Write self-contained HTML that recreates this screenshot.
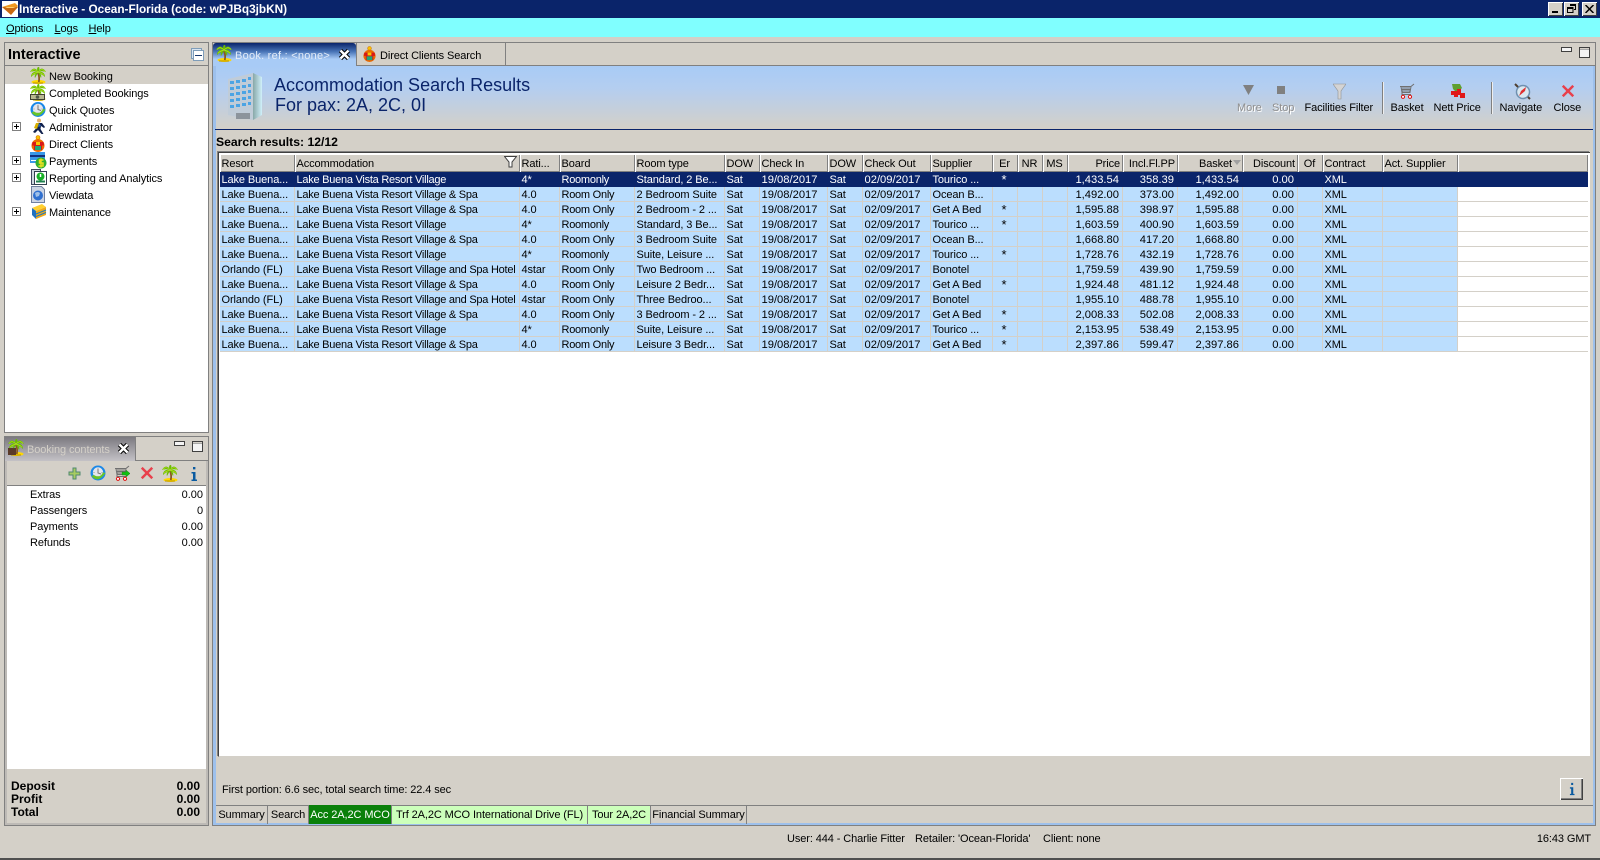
<!DOCTYPE html>
<html><head><meta charset="utf-8"><title>Interactive - Ocean-Florida</title>
<style>
html,body{margin:0;padding:0;width:1600px;height:860px;overflow:hidden;background:#d4d0c8;font:11px/14px "Liberation Sans",Arial,sans-serif;letter-spacing:-.1px;color:#000}
.a{position:absolute}
.t{position:absolute;white-space:nowrap;line-height:14px;margin-top:1px}
.t[style*="font-size"]{margin-top:0}
svg{position:absolute;display:block}
u{text-decoration:underline}
#tb{left:220px;top:154px;border-collapse:separate;border-spacing:0;table-layout:fixed;width:1368px;position:absolute}
#tb th,#tb td{padding:0 0 0 1.500px;overflow:hidden;white-space:nowrap;font-weight:normal;text-align:left;box-sizing:border-box}
#tb th{height:18px;line-height:16px;background:#d4d0c8;box-shadow:inset 1px 1px 0 #fff,inset -1px -1px 0 #808080,inset -2px -2px 0 #d4d0c8;vertical-align:top;padding-top:2px}
#tb td{height:15px;line-height:12px;padding-top:2px;background:#bbdefe;border-right:1px solid #d4d0c8;border-bottom:1px solid #d4d0c8;vertical-align:top}
#tb td:last-child{background:#fff;border-right:0}
#tb td:nth-child(7),#tb td:nth-child(9),#tb td:nth-child(14),#tb td:nth-child(15),#tb td:nth-child(16),#tb td:nth-child(17){font-size:11.200px;letter-spacing:0}
#tb td:nth-child(2),#tb td:nth-child(4){letter-spacing:-.25px}
#tb td:nth-child(11){font-size:13px;padding-left:8.500px}
#tb .r{text-align:right;padding:2px 3px 0 0}
#tb th.r{padding:2px 3px 0 0}
#tb th.c{text-align:center;padding:2px 2px 0 0}
#tb tr.s td,#tb tr.s td:last-child{background:#0a246a;color:#fff;border-color:#0a246a}
.pane{border:1px solid #808080;box-sizing:border-box}
.btm{position:absolute;top:806px;height:18px;line-height:19px;text-align:center;white-space:nowrap;box-sizing:border-box;border-right:1px solid #808080}
.pb{width:7px;height:7px;border:1px solid #808080;background:#fff;position:absolute;left:12px}
.pb:before{content:"";position:absolute;left:1px;top:3px;width:5px;height:1px;background:#000}
.pb:after{content:"";position:absolute;left:3px;top:1px;width:1px;height:5px;background:#000}
</style></head><body>
<svg width="0" height="0" style="position:absolute"><defs>
<symbol id="palm" viewBox="0 0 16 17"><ellipse cx="8.500" cy="15" rx="7" ry="2" fill="#ffd800"/><path d="M3 16h10" stroke="#b89000"/><path d="M8 6Q9.800 10 8.800 15" stroke="#8a5a20" stroke-width="1.800" fill="none"/><path d="M8 5C6 0 2 1 0 5 3 4 5.500 4 8 5ZM8 5C10 0 14 1 16 5 13 4 10.500 4 8 5ZM8 5C4 4 1 6 1 10 3 8 6 7 8 5ZM8 5C12 4 15 6 15 10 13 8 10 7 8 5ZM8 5C6.500 3 7 0 8.500 0 10 0 9.500 3 8 5ZM8 5C5.500 6 4 9 5 11 6 9 7.500 7 8 5ZM8 5C10.500 6 12 9 11 11 10 9 8.500 7 8 5Z" fill="#6cbc00"/><path d="M1 4.500C3 2 5 2 8 5M15 4.500C13 2 11 2 8 5M2 8.500C3 6.500 5 6 8 5M14 8.500C13 6.500 11 6 8 5" stroke="#b4e020" stroke-width=".7" fill="none"/></symbol>
<symbol id="clock" viewBox="0 0 16 16"><circle cx="8" cy="8" r="7.500" fill="#1a88e8"/><circle cx="8" cy="7.500" r="5.200" fill="#e4e6ec"/><path d="M8 4v4l3 1" stroke="#777" fill="none"/><path d="M8 3.200v.8M8 11v.8M3.500 7.500h1M11.500 7.500h1" stroke="#999"/><path d="M1.500 11Q8 19 15.500 8l-2.500-.5Q9.500 14 4 10Z" fill="#68c428"/></symbol>
<symbol id="client" viewBox="0 0 16 17"><circle cx="8" cy="2.500" r="2" fill="#f8c000" stroke="#d07000" stroke-width=".6"/><circle cx="8" cy="10.500" r="6.500" fill="#ec6c00"/><path d="M2.500 7h11l.5 3.500H12V15H4v-4.500H2z" fill="#d81818"/><path d="M6 7h4v3H6z" fill="#f8c800"/><path d="M5 11h6v4H5z" fill="#20a878"/></symbol>
<symbol id="cart" viewBox="0 0 16 16"><path d="M1 3.500h11l3-2.500M2 3.500l1 6h8l1-6M4 3.500v6M6 3.500v6M8 3.500v6M10 3.500v6M2.500 6.500h9.500M3 9.500v2h9" fill="none" stroke="#707070"/><circle cx="4" cy="13.800" r="1.600" fill="#fff" stroke="#e01010"/><circle cx="11" cy="13.800" r="1.600" fill="#fff" stroke="#e01010"/></symbol>
<symbol id="x" viewBox="0 0 16 16"><path d="M3 1l5 5 5-5 2 2-5 5 5 5-2 2-5-5-5 5-2-2 5-5-5-5z" fill="#e8404c"/></symbol>
<symbol id="info" viewBox="0 0 12 16"><path d="M5 1h2.400v2.400H5zM3.500 6h4v7.500H9V15H3.500v-1.500H5V7.500H3.500z" fill="#0a5aa0"/></symbol>
<symbol id="cl" viewBox="0 0 13 13"><path d="M2.500 2.500l8 8M10.500 2.500l-8 8" stroke="#000" stroke-width="4.500"/><path d="M2.500 2.500l8 8M10.500 2.500l-8 8" stroke="#fff" stroke-width="2.500"/></symbol>
<symbol id="maxi" viewBox="0 0 11 11"><path d="M.5.500h10v10H.500z" fill="#f4f4f4" stroke="#404040"/><path d="M0 0h11v2.500H0z" fill="#404040" opacity=".85"/><path d="M1 1h9v1H1z" fill="#d4d0c8"/></symbol>
<symbol id="mini" viewBox="0 0 11 5"><path d="M.5.500h10v4H.500z" fill="#f4f4f4" stroke="#404040"/></symbol>
</defs></svg>

<!-- title bar -->
<div class="a" style="left:0;top:0;width:1600px;height:18px;background:#0a246a"></div>
<svg style="left:2px;top:1px" width="16" height="16" viewBox="0 0 16 16"><path d="M0 0h16v16H0z" fill="#fff"/><path d="M0 6L13 2l3 3-7 8z" fill="#f09820"/><path d="M0 6h16l-7 8z" fill="#c86810"/><path d="M3 6h11l-3 1H5z" fill="#ffd070"/></svg>
<div class="t" style="left:19px;top:2px;color:#fff;font-weight:bold;font-size:11.800px;letter-spacing:0">Interactive - Ocean-Florida (code: wPJBq3jbKN)</div>
<div class="a" style="left:1548px;top:2px;width:15px;height:14px;background:#d4d0c8;box-shadow:inset 1px 1px 0 #fff,inset -1px -1px 0 #404040"><div class="a" style="left:4px;top:9px;width:6px;height:2px;background:#000"></div></div>
<div class="a" style="left:1564px;top:2px;width:15px;height:14px;background:#d4d0c8;box-shadow:inset 1px 1px 0 #fff,inset -1px -1px 0 #404040"><svg style="left:3px;top:2px" width="9" height="9" viewBox="0 0 9 9"><path d="M3 .5h5.500v5H7M3 1.500h5.500M.5 3.500h5.500v5H.5zM.5 4.500h5.500" fill="none" stroke="#000"/></svg></div>
<div class="a" style="left:1582px;top:2px;width:15px;height:14px;background:#d4d0c8;box-shadow:inset 1px 1px 0 #fff,inset -1px -1px 0 #404040"><svg style="left:3px;top:3px" width="9" height="8" viewBox="0 0 9 8"><path d="M.5 0l8 8M8.500 0l-8 8" stroke="#000" stroke-width="1.500"/></svg></div>

<!-- menu -->
<div class="a" style="left:0;top:18px;width:1600px;height:19px;background:#80ffff"></div>
<div class="t" style="left:6px;top:21px"><u>O</u>ptions</div>
<div class="t" style="left:54.500px;top:21px"><u>L</u>ogs</div>
<div class="t" style="left:88.500px;top:21px"><u>H</u>elp</div>

<!-- left tree panel -->
<div class="a pane" style="left:4px;top:42px;width:205px;height:391px;background:#fff;border-width:1.500px;border-color:#808080"></div>
<div class="a" style="left:5px;top:43px;width:203px;height:22px;background:#d4d0c8;border-bottom:1px solid #808080"></div>
<div class="t" style="left:8px;top:48px;font-weight:bold;font-size:14.500px;letter-spacing:0">Interactive</div>
<div class="a" style="left:191px;top:48px;width:9px;height:9px;border:1px solid #7f9db9;background:#d8e4f0"></div>
<div class="a" style="left:193px;top:50px;width:9px;height:9px;border:1px solid #7f9db9;background:#fff"><div class="a" style="left:1px;top:4px;width:7px;height:1px;background:#1a3a70"></div></div>
<div class="a" style="left:5px;top:66px;width:203px;height:18px;background:#d4d0c8"></div>
<svg style="left:30px;top:67px" width="16" height="17"><use href="#palm"/></svg>
<div class="t" style="left:49px;top:69px">New Booking</div>
<svg style="left:30px;top:84px" width="16" height="17" viewBox="0 0 16 17"><use href="#palm" width="16" height="17"/><path d="M.5 10.500h14v5H.500z" fill="#b8b890" stroke="#404030"/><circle cx="7.500" cy="13" r="1.800" fill="#505848"/></svg>
<div class="t" style="left:49px;top:86px">Completed Bookings</div>
<svg style="left:30px;top:101px" width="16" height="17"><use href="#clock"/></svg>
<div class="t" style="left:49px;top:103px">Quick Quotes</div>
<svg style="left:32px;top:118px" width="15" height="17" viewBox="0 0 15 17"><circle cx="7" cy="2.500" r="2" fill="#e0b070"/><path d="M5 5l5 0 3 4-1 1-3-2-.5 3 3 5h-2L6 12l-3 3-2-1 3-3.500L4.500 7z" fill="#10204c"/><path d="M4 5L2 10l3 1 2-6z" fill="#d8b000"/><path d="M7 5l2 3-3 1z" fill="#2868b8"/></svg>
<div class="t" style="left:49px;top:120px">Administrator</div>
<svg style="left:30px;top:135px" width="16" height="17"><use href="#client"/></svg>
<div class="t" style="left:49px;top:137px">Direct Clients</div>
<svg style="left:30px;top:152px" width="17" height="17" viewBox="0 0 17 17"><path d="M0 0h15v11H0z" fill="#3898e8"/><path d="M0 3h15v2H0z" fill="#103080"/><path d="M1 8h5v1H1z" fill="#fff"/><circle cx="11" cy="11" r="5.500" fill="#30b030"/><path d="M13.500 8h-4v3h3.500v3H8.500M11 6.500v9" fill="none" stroke="#e8e020" stroke-width="1.500"/></svg>
<div class="t" style="left:49px;top:154px">Payments</div>
<svg style="left:31px;top:169px" width="16" height="17" viewBox="0 0 16 17"><path d="M.5.500h9v15h-9z" fill="#d0d8e0" stroke="#404860"/><path d="M3.500 2.500h12v13h-12z" fill="#fff" stroke="#304050"/><circle cx="9.500" cy="7.500" r="4" fill="#18b028"/><path d="M9.500 5v3" stroke="#fff" stroke-width="1.500"/><path d="M5 12.500h9" stroke="#208050" stroke-width="2"/></svg>
<div class="t" style="left:49px;top:171px">Reporting and Analytics</div>
<svg style="left:31px;top:186px" width="15" height="17" viewBox="0 0 15 17"><path d="M.5.500h10l3 3v13H.5z" fill="#ccd4e4" stroke="#7080a0"/><circle cx="7" cy="9.500" r="5" fill="#3070d0"/><path d="M4 7q3-2 5 0l-1 3-3 1z" fill="#a0c0e8"/></svg>
<div class="t" style="left:49px;top:188px">Viewdata</div>
<svg style="left:31px;top:203px" width="16" height="17" viewBox="0 0 16 17"><path d="M1 5l10-4 4 3-10 4z" fill="#ffd030"/><path d="M1 5l4 3v8L1 12z" fill="#2070c0"/><path d="M5 8l10-4v8L5 16z" fill="#f0a818"/><path d="M5 11l10-4M5 13.500l10-4" stroke="#1878c8"/></svg>
<div class="t" style="left:49px;top:205px">Maintenance</div>
<div class="pb" style="top:122px"></div>
<div class="pb" style="top:156px"></div>
<div class="pb" style="top:173px"></div>
<div class="pb" style="top:207px"></div>

<!-- booking contents -->
<div class="a pane" style="left:4px;top:436px;width:205px;height:390px;background:#d4d0c8"></div>
<div class="a" style="left:5px;top:437px;width:130px;height:24px;background:linear-gradient(#7c7a80,#c4c2c6);border-right:1px solid #808080"></div>
<div class="a" style="left:136px;top:460px;width:72px;height:1px;background:#808080"></div>
<svg style="left:8px;top:439px" width="16" height="17" viewBox="0 0 16 17"><use href="#palm" width="16" height="17"/><path d="M0 9h8v7H0z" fill="#5a3a28"/></svg>
<div class="t" style="left:27px;top:442px;color:#d4d0c8">Booking contents</div>
<svg style="left:117px;top:442px" width="13" height="13"><use href="#cl"/></svg>
<svg style="left:174px;top:441px" width="11" height="5"><use href="#mini"/></svg>
<svg style="left:192px;top:441px" width="11" height="11"><use href="#maxi"/></svg>
<div class="a" style="left:7px;top:461px;width:199px;height:24px;background:#d4d0c8;border-bottom:1px solid #808080;border-left:0"></div>
<div class="a" style="left:5px;top:461px;width:2px;height:364px;background:#bdbab6"></div>
<div class="a" style="left:206px;top:461px;width:2px;height:364px;background:#bdbab6"></div>
<div class="a" style="left:5px;top:823px;width:203px;height:2px;background:#bdbab6"></div>
<svg style="left:68px;top:467px" width="13" height="13" viewBox="0 0 13 13"><path d="M5 1h3v4h4v3H8v4H5V8H1V5h4z" fill="#a8cc60" stroke="#508870"/></svg>
<svg style="left:90px;top:465px" width="16" height="16"><use href="#clock"/></svg>
<svg style="left:114px;top:465px" width="16" height="16"><use href="#cart"/><path d="M8 7h4V5l4 3.500-4 3.500V10H8z" fill="#10c010" stroke="#208020" stroke-width=".5"/></svg>
<svg style="left:140px;top:466px" width="14" height="14"><use href="#x"/></svg>
<svg style="left:162px;top:465px" width="16" height="17"><use href="#palm"/></svg>
<svg style="left:188px;top:466px" width="12" height="16"><use href="#info"/></svg>
<div class="a" style="left:7px;top:486px;width:199px;height:283px;background:#fff"></div>
<div class="t" style="left:30px;top:487px">Extras</div><div class="t" style="right:1397px;top:487px;letter-spacing:0">0.00</div>
<div class="t" style="left:30px;top:503px">Passengers</div><div class="t" style="right:1397px;top:503px">0</div>
<div class="t" style="left:30px;top:519px">Payments</div><div class="t" style="right:1397px;top:519px;letter-spacing:0">0.00</div>
<div class="t" style="left:30px;top:535px">Refunds</div><div class="t" style="right:1397px;top:535px;letter-spacing:0">0.00</div>
<div class="t" style="left:11px;top:779px;font-weight:bold;font-size:12px;letter-spacing:0">Deposit</div><div class="t" style="right:1400px;top:779px;font-weight:bold;font-size:12px;letter-spacing:0">0.00</div>
<div class="t" style="left:11px;top:792px;font-weight:bold;font-size:12px;letter-spacing:0">Profit</div><div class="t" style="right:1400px;top:792px;font-weight:bold;font-size:12px;letter-spacing:0">0.00</div>
<div class="t" style="left:11px;top:805px;font-weight:bold;font-size:12px;letter-spacing:0">Total</div><div class="t" style="right:1400px;top:805px;font-weight:bold;font-size:12px;letter-spacing:0">0.00</div>

<!-- right main panel -->
<div class="a" style="left:212px;top:42px;width:1384px;height:784px;border:1px solid #808080;box-sizing:border-box;background:#d4d0c8"></div>
<div class="a" style="left:213px;top:65px;width:3px;height:760px;background:#9dc0ec"></div>
<div class="a" style="left:1593px;top:65px;width:2px;height:760px;background:#9dc0ec"></div>
<div class="a" style="left:213px;top:823px;width:1382px;height:2px;background:#9dc0ec"></div>
<div class="a" style="left:213px;top:65px;width:1382px;height:1px;background:#808080"></div>
<!-- tabs -->
<div class="a" style="left:213px;top:43px;width:143px;height:23px;background:linear-gradient(#0a246a 0%,#4a76b8 38%,#a8cbf6 70%);border-radius:3px 3px 0 0"></div>
<svg style="left:216px;top:45px" width="16" height="17"><use href="#palm"/></svg>
<div class="t" style="left:235px;top:48px;color:#e4ecf8;letter-spacing:.25px">Book. ref.: &lt;none&gt;</div>
<svg style="left:338px;top:48px" width="13" height="13"><use href="#cl"/></svg>
<div class="a" style="left:356px;top:43px;width:150px;height:22px;border-right:1px solid #808080;border-left:1px solid #808080;box-sizing:border-box"></div>
<svg style="left:362px;top:46px" width="15" height="16"><use href="#client"/></svg>
<div class="t" style="left:380px;top:48px">Direct Clients Search</div>
<svg style="left:1561px;top:47px" width="11" height="5"><use href="#mini"/></svg>
<svg style="left:1579px;top:47px" width="11" height="11"><use href="#maxi"/></svg>
<!-- header -->
<div class="a" style="left:216px;top:66px;width:1377px;height:63px;background:linear-gradient(#a8cbf6 0%,#b4cef0 35%,#d4d0c8 100%)"></div>
<div class="a" style="left:215px;top:129px;width:1378px;height:1px;background:#0a246a"></div>
<svg style="left:228px;top:73px" width="35" height="48" viewBox="0 0 35 48"><defs><linearGradient id="bs" x1="0" x2="1" y1="0" y2="0"><stop offset="0" stop-color="#88a8a8"/><stop offset="1" stop-color="#d0f0fa"/></linearGradient></defs><path d="M0 6L25 0v47L0 42z" fill="#c0ccd8"/><path d="M25 0l9 4v38l-9 5z" fill="url(#bs)"/><g fill="#4ca4e4"><path d="M2 8h4v3H2zM8 7h4v3H8zM14 6h4v3h-4zM20 4h3v3h-3z"/><path d="M2 14h4v3H2zM8 13h4v3H8zM14 12h4v3h-4zM20 11h3v3h-3z"/><path d="M2 20h4v3H2zM8 19h4v3H8zM14 18h4v3h-4zM20 17h3v3h-3z"/><path d="M2 26h4v3H2zM8 25h4v3H8zM14 24h4v3h-4zM20 23h3v3h-3z"/><path d="M2 32h4v3H2zM8 31h4v3H8zM14 30h4v3h-4zM20 29h3v3h-3z"/></g><path d="M8 40h14v6H8z" fill="#8c949c"/></svg>
<div class="t" style="left:274px;top:75px;color:#0a246a;font-size:18px;line-height:20px;letter-spacing:0">Accommodation Search Results</div>
<div class="t" style="left:275px;top:95px;color:#0a246a;font-size:18px;line-height:20px;letter-spacing:0">For pax: 2A, 2C, 0I</div>
<!-- toolbar -->
<svg style="left:1243px;top:85px" width="11" height="10" viewBox="0 0 11 10"><path d="M0 0h11L5.500 10z" fill="#808080"/></svg>
<div class="a" style="left:1277px;top:86px;width:8px;height:8px;background:#808080"></div>
<svg style="left:1333px;top:83px" width="13" height="17" viewBox="0 0 13 17"><path d="M0 1h13L8 8v8H5V8z" fill="#d4d4d4" stroke="#909090" stroke-width=".6"/></svg>
<div class="t" style="left:1237px;top:100px;color:#8f8f8f;text-shadow:1px 1px 0 #fff">More</div>
<div class="t" style="left:1272px;top:100px;color:#8f8f8f;text-shadow:1px 1px 0 #fff">Stop</div>
<div class="t" style="left:1304.500px;top:100px">Facilities Filter</div>
<div class="a" style="left:1382px;top:82px;width:1px;height:32px;background:#808080;box-shadow:1px 0 0 #eee"></div>
<svg style="left:1399px;top:83px" width="16" height="16"><use href="#cart"/></svg>
<div class="t" style="left:1390.500px;top:100px">Basket</div>
<svg style="left:1450px;top:83px" width="16" height="16" viewBox="0 0 16 16"><path d="M2 1h8l2 4-5 5-4-4z" fill="#60a030"/><path d="M1 8h6v4H1zM7 6h4v6H7zM10 10h5v5h-5zM4 11h4v3H4z" fill="#e01818"/></svg>
<div class="t" style="left:1433.500px;top:100px">Nett Price</div>
<div class="a" style="left:1491px;top:82px;width:1px;height:32px;background:#808080;box-shadow:1px 0 0 #eee"></div>
<svg style="left:1514px;top:83px" width="17" height="17" viewBox="0 0 17 17"><circle cx="9" cy="9" r="6.500" fill="#dbe8f0" stroke="#7090b0" stroke-width="1.500"/><path d="M5 13l6-5 1-4-5 4z" fill="#e03030"/><path d="M1 1l3 3M14 14l2 2" stroke="#504030" stroke-width="2"/></svg>
<div class="t" style="left:1499.500px;top:100px">Navigate</div>
<svg style="left:1561px;top:84px" width="14" height="14"><use href="#x"/></svg>
<div class="t" style="left:1553.500px;top:100px">Close</div>

<div class="t" style="left:216px;top:135px;font-weight:bold;font-size:12.200px;letter-spacing:0">Search results: 12/12</div>

<!-- table -->
<div class="a" style="left:218px;top:152px;width:1372px;height:605px;background:#fff;box-sizing:border-box;border-top:1px solid #404040;border-left:1px solid #404040;border-bottom:1px solid #d4d0c8;box-shadow:-1px -1px 0 #808080"></div>
<table id="tb">
<colgroup><col style="width:75px"><col style="width:225px"><col style="width:40px"><col style="width:75px"><col style="width:90px"><col style="width:35px"><col style="width:68px"><col style="width:35px"><col style="width:68px"><col style="width:62px"><col style="width:25px"><col style="width:25px"><col style="width:25px"><col style="width:55px"><col style="width:55px"><col style="width:65px"><col style="width:55px"><col style="width:25px"><col style="width:60px"><col style="width:75px"><col></colgroup>
<tr><th>Resort</th><th>Accommodation</th><th>Rati...</th><th>Board</th><th>Room type</th><th>DOW</th><th>Check In</th><th>DOW</th><th>Check Out</th><th>Supplier</th><th class="c">Er</th><th class="c">NR</th><th class="c">MS</th><th class="r">Price</th><th class="r">Incl.Fl.PP</th><th class="r" style="padding-right:11px">Basket</th><th class="r">Discount</th><th class="c">Of</th><th>Contract</th><th>Act. Supplier</th><th></th></tr>
<tr class="s"><td>Lake Buena...</td><td>Lake Buena Vista Resort Village</td><td>4*</td><td>Roomonly</td><td>Standard, 2 Be...</td><td>Sat</td><td>19/08/2017</td><td>Sat</td><td>02/09/2017</td><td>Tourico ...</td><td>*</td><td></td><td></td><td class="r">1,433.54</td><td class="r">358.39</td><td class="r">1,433.54</td><td class="r">0.00</td><td></td><td>XML</td><td></td><td></td></tr>
<tr><td>Lake Buena...</td><td>Lake Buena Vista Resort Village &amp; Spa</td><td>4.0</td><td>Room Only</td><td>2 Bedroom Suite</td><td>Sat</td><td>19/08/2017</td><td>Sat</td><td>02/09/2017</td><td>Ocean B...</td><td></td><td></td><td></td><td class="r">1,492.00</td><td class="r">373.00</td><td class="r">1,492.00</td><td class="r">0.00</td><td></td><td>XML</td><td></td><td></td></tr>
<tr><td>Lake Buena...</td><td>Lake Buena Vista Resort Village &amp; Spa</td><td>4.0</td><td>Room Only</td><td>2 Bedroom - 2 ...</td><td>Sat</td><td>19/08/2017</td><td>Sat</td><td>02/09/2017</td><td>Get A Bed</td><td>*</td><td></td><td></td><td class="r">1,595.88</td><td class="r">398.97</td><td class="r">1,595.88</td><td class="r">0.00</td><td></td><td>XML</td><td></td><td></td></tr>
<tr><td>Lake Buena...</td><td>Lake Buena Vista Resort Village</td><td>4*</td><td>Roomonly</td><td>Standard, 3 Be...</td><td>Sat</td><td>19/08/2017</td><td>Sat</td><td>02/09/2017</td><td>Tourico ...</td><td>*</td><td></td><td></td><td class="r">1,603.59</td><td class="r">400.90</td><td class="r">1,603.59</td><td class="r">0.00</td><td></td><td>XML</td><td></td><td></td></tr>
<tr><td>Lake Buena...</td><td>Lake Buena Vista Resort Village &amp; Spa</td><td>4.0</td><td>Room Only</td><td>3 Bedroom Suite</td><td>Sat</td><td>19/08/2017</td><td>Sat</td><td>02/09/2017</td><td>Ocean B...</td><td></td><td></td><td></td><td class="r">1,668.80</td><td class="r">417.20</td><td class="r">1,668.80</td><td class="r">0.00</td><td></td><td>XML</td><td></td><td></td></tr>
<tr><td>Lake Buena...</td><td>Lake Buena Vista Resort Village</td><td>4*</td><td>Roomonly</td><td>Suite, Leisure ...</td><td>Sat</td><td>19/08/2017</td><td>Sat</td><td>02/09/2017</td><td>Tourico ...</td><td>*</td><td></td><td></td><td class="r">1,728.76</td><td class="r">432.19</td><td class="r">1,728.76</td><td class="r">0.00</td><td></td><td>XML</td><td></td><td></td></tr>
<tr><td>Orlando (FL)</td><td>Lake Buena Vista Resort Village and Spa Hotel</td><td>4star</td><td>Room Only</td><td>Two Bedroom ...</td><td>Sat</td><td>19/08/2017</td><td>Sat</td><td>02/09/2017</td><td>Bonotel</td><td></td><td></td><td></td><td class="r">1,759.59</td><td class="r">439.90</td><td class="r">1,759.59</td><td class="r">0.00</td><td></td><td>XML</td><td></td><td></td></tr>
<tr><td>Lake Buena...</td><td>Lake Buena Vista Resort Village &amp; Spa</td><td>4.0</td><td>Room Only</td><td>Leisure 2 Bedr...</td><td>Sat</td><td>19/08/2017</td><td>Sat</td><td>02/09/2017</td><td>Get A Bed</td><td>*</td><td></td><td></td><td class="r">1,924.48</td><td class="r">481.12</td><td class="r">1,924.48</td><td class="r">0.00</td><td></td><td>XML</td><td></td><td></td></tr>
<tr><td>Orlando (FL)</td><td>Lake Buena Vista Resort Village and Spa Hotel</td><td>4star</td><td>Room Only</td><td>Three Bedroo...</td><td>Sat</td><td>19/08/2017</td><td>Sat</td><td>02/09/2017</td><td>Bonotel</td><td></td><td></td><td></td><td class="r">1,955.10</td><td class="r">488.78</td><td class="r">1,955.10</td><td class="r">0.00</td><td></td><td>XML</td><td></td><td></td></tr>
<tr><td>Lake Buena...</td><td>Lake Buena Vista Resort Village &amp; Spa</td><td>4.0</td><td>Room Only</td><td>3 Bedroom - 2 ...</td><td>Sat</td><td>19/08/2017</td><td>Sat</td><td>02/09/2017</td><td>Get A Bed</td><td>*</td><td></td><td></td><td class="r">2,008.33</td><td class="r">502.08</td><td class="r">2,008.33</td><td class="r">0.00</td><td></td><td>XML</td><td></td><td></td></tr>
<tr><td>Lake Buena...</td><td>Lake Buena Vista Resort Village</td><td>4*</td><td>Roomonly</td><td>Suite, Leisure ...</td><td>Sat</td><td>19/08/2017</td><td>Sat</td><td>02/09/2017</td><td>Tourico ...</td><td>*</td><td></td><td></td><td class="r">2,153.95</td><td class="r">538.49</td><td class="r">2,153.95</td><td class="r">0.00</td><td></td><td>XML</td><td></td><td></td></tr>
<tr><td>Lake Buena...</td><td>Lake Buena Vista Resort Village &amp; Spa</td><td>4.0</td><td>Room Only</td><td>Leisure 3 Bedr...</td><td>Sat</td><td>19/08/2017</td><td>Sat</td><td>02/09/2017</td><td>Get A Bed</td><td>*</td><td></td><td></td><td class="r">2,397.86</td><td class="r">599.47</td><td class="r">2,397.86</td><td class="r">0.00</td><td></td><td>XML</td><td></td><td></td></tr>
</table>
<svg style="left:1233px;top:160px" width="8" height="5" viewBox="0 0 8 5"><path d="M0 0h8L4 5z" fill="#a0a0a0"/></svg>
<svg style="left:504px;top:156px" width="13" height="12" viewBox="0 0 13 12"><path d="M.5.500h12L8 6v5H5V6z" fill="#fff" stroke="#404040"/></svg>

<div class="t" style="left:222px;top:782px">First portion: 6.6 sec, total search time: 22.4 sec</div>
<div class="a" style="left:1560px;top:778px;width:23px;height:22px;background:#d4d0c8;box-shadow:inset 1px 1px 0 #fff,inset -1px -1px 0 #404040,inset -2px -2px 0 #808080"><svg style="left:7px;top:4px" width="10" height="14" viewBox="0 0 12 16" preserveAspectRatio="none"><use href="#info"/></svg></div>

<!-- bottom tabs -->
<div class="a" style="left:216px;top:805px;width:1377px;height:1px;background:#808080"></div>
<div class="btm" style="left:216px;width:52px">Summary</div>
<div class="btm" style="left:268px;width:41px">Search</div>
<div class="btm" style="left:309px;width:83px;background:#0a800a;color:#fff;border-right:1px solid #808080;top:805px;height:19px;line-height:20px">Acc 2A,2C MCO</div>
<div class="btm" style="left:392px;width:196px;background:#ccffbb">Trf 2A,2C MCO International Drive (FL)</div>
<div class="btm" style="left:588px;width:63px;background:#ccffbb">Tour 2A,2C</div>
<div class="btm" style="left:651px;width:96px">Financial Summary</div>

<!-- status -->
<div class="t" style="left:787px;top:831px">User: 444 - Charlie Fitter</div>
<div class="t" style="left:915px;top:831px">Retailer: 'Ocean-Florida'</div>
<div class="t" style="left:1043px;top:831px">Client: none</div>
<div class="t" style="right:9px;top:831px">16:43 GMT</div>
<div class="a" style="left:0;top:858px;width:1600px;height:2px;background:#505050"></div>
</body></html>
